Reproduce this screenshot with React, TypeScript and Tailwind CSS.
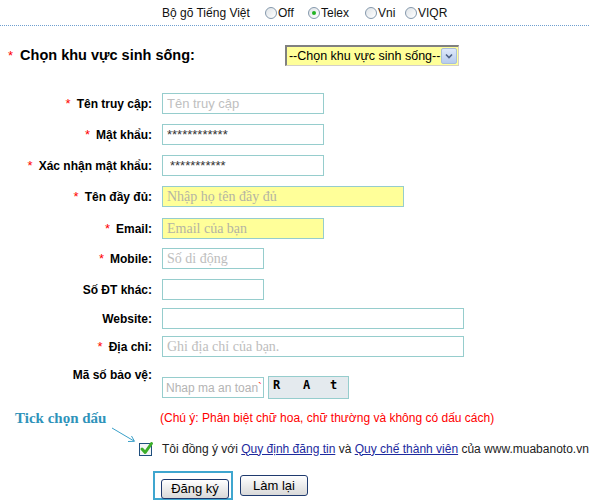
import React from 'react';

const sans = "font-['Liberation_Sans',Arial,sans-serif]";
const serif = "font-['Liberation_Serif','Times_New_Roman',serif]";

const Radio = ({ label, checked, className }: { label: string; checked?: boolean; className: string }) => (
  <span className={`flex items-center ${className}`}>
    <span className="w-[12px] h-[12px] rounded-full border border-[#8598ac] bg-linear-to-br from-[#dfe4e8] to-white flex items-center justify-center">
      {checked && <span className="w-[4px] h-[4px] rounded-full bg-[#22b322]" />}
    </span>
    <span className="ml-[1px]">{label}</span>
  </span>
);

interface RowProps {
  label: string;
  req?: boolean;
  className: string;
  children: React.ReactNode;
}

const Row = ({ label, req, className, children }: RowProps) => (
  <div className={`flex items-center ${className}`}>
    <div className="w-[152px] shrink-0 text-right text-[12px] font-bold text-black leading-[14px]">
      {req && <span className="text-[#ff0000] font-normal text-[13px] mr-[6px]">*</span>}
      {label}
    </div>
    <div className="ml-[10px] flex">{children}</div>
  </div>
);

// khung ô nhập, màu nền đặt riêng từng ô
const field = 'h-[21px] border border-[#96cdcd] px-[4px] outline-none';

export default function App() {
  return (
    <div className={`relative w-[589px] h-[500px] bg-white overflow-hidden text-black ${sans}`}>
      {/* bộ gõ */}
      <div className="h-[25px] flex items-center pl-[162px] text-[12px] text-[#111]">
        <span className="w-[103px]">Bộ gõ Tiếng Việt</span>
        <Radio label="Off" className="w-[43px]" />
        <Radio label="Telex" checked className="w-[57px]" />
        <Radio label="Vni" className="w-[40px]" />
        <Radio label="VIQR" className="w-[50px]" />
      </div>
      <div className="border-b border-dotted border-[#6f9fcf]" />

      {/* khu vực */}
      <div className="mt-[19px] h-[21px] flex items-center">
        <span className="ml-[8px] text-[13px] text-[#ff0000]">*</span>
        <span className="ml-[7px] text-[14.5px] font-bold">Chọn khu vực sinh sống:</span>
        <div className="ml-[90px] w-[174px] h-[21px] flex items-center bg-[#ffff99] border-t-2 border-l-2 border-r border-b border-t-[#808080] border-l-[#808080] border-r-[#d4d0c8] border-b-[#d4d0c8]">
          <span className="flex-1 pl-[2px] text-[12.5px] leading-[17px] whitespace-nowrap overflow-hidden">--Chọn khu vực sinh sống--</span>
          <span className="w-[16px] h-[16px] mr-[1px] rounded-[2px] border border-[#a9bedb] bg-linear-to-b from-[#dfe9fa] to-[#b6cbed] flex items-center justify-center">
            <svg width="8" height="6" viewBox="0 0 8 6">
              <path d="M1 1.5 L4 4.5 L7 1.5" fill="none" stroke="#4d6185" strokeWidth="1.6" />
            </svg>
          </span>
        </div>
      </div>

      {/* form */}
      <Row label="Tên truy cập:" req className="mt-[27px]">
        <input className={`${field} w-[162px] bg-white text-[13px] placeholder:text-[#c0c0c0]`} placeholder="Tên truy cập" readOnly />
      </Row>
      <Row label="Mật khẩu:" req className="mt-[10px]">
        <input className={`${field} w-[162px] bg-white text-[13px] text-[#333]`} value="************" readOnly />
      </Row>
      <Row label="Xác nhận mật khẩu:" req className="mt-[10px]">
        <input className={`${field} w-[162px] bg-white pl-[7px] text-[13px] text-[#333]`} value="***********" readOnly />
      </Row>
      <Row label="Tên đầy đủ:" req className="mt-[10px]">
        <input className={`${field} w-[242px] bg-[#ffff99] text-[14px] ${serif} placeholder:text-[#b4b4a4]`} placeholder="Nhập họ tên đầy đủ" readOnly />
      </Row>
      <Row label="Email:" req className="mt-[11px]">
        <input className={`${field} w-[162px] bg-[#ffff99] text-[14px] ${serif} placeholder:text-[#b4b4a4]`} placeholder="Email của bạn" readOnly />
      </Row>
      <Row label="Mobile:" req className="mt-[9px]">
        <input className={`${field} w-[102px] bg-white text-[14px] ${serif} placeholder:text-[#bdbdbd]`} placeholder="Số di động" readOnly />
      </Row>
      <Row label="Số ĐT khác:" className="mt-[10px]">
        <input className={`${field} w-[102px] bg-white`} readOnly />
      </Row>
      <Row label="Website:" className="mt-[8px]">
        <input className={`${field} w-[302px] bg-white`} readOnly />
      </Row>
      <Row label="Địa chỉ:" req className="mt-[7px]">
        <input className={`${field} w-[302px] bg-white text-[14px] ${serif} placeholder:text-[#bdbdbd]`} placeholder="Ghi địa chỉ của bạn." readOnly />
      </Row>

      {/* mã bảo vệ */}
      <div className="mt-[11px] flex items-start">
        <div className="w-[152px] shrink-0 text-right text-[12px] font-bold leading-[14px]">Mã số bảo vệ:</div>
        <div className="ml-[10px] pt-[8px] flex items-start">
          <div className="mt-[1px] w-[102px] h-[21px] border border-[#96cdcd] pl-[3px] flex items-center text-[12px] text-[#b4b4b4] whitespace-nowrap overflow-hidden">
            Nhap ma an toan<span className="text-[#ff3030]">`</span>
          </div>
          <div className="ml-[4px] w-[81px] h-[23px] border border-[#96cdcd] bg-[#e4eaee] flex items-start pt-[1px] pl-[4px] font-['DejaVu_Sans_Mono','Liberation_Mono',monospace] text-[12px] font-bold leading-[14px]">
            <span className="w-[30px]">R</span>
            <span className="w-[27px]">A</span>
            <span>t</span>
          </div>
        </div>
      </div>

      {/* ghi chú */}
      <div className="mt-[11px] flex items-center h-[16px]">
        <div className={`w-[152px] shrink-0 pl-[15px] text-[15px] font-bold text-[#2f93ba] whitespace-nowrap ${serif}`}>Tick chọn dấu</div>
        <div className="ml-[8px] text-[12px] text-[#ff0000] whitespace-nowrap">
          (Chú ý: Phân biệt chữ hoa, chữ thường và không có dấu cách)
        </div>
      </div>

      {/* đồng ý */}
      <div className="mt-[15px] flex items-center h-[15px]">
        <div className="w-[154px] shrink-0 flex justify-end">
          <svg width="16" height="16" viewBox="0 0 16 16">
            <rect x="1.5" y="2.5" width="12" height="12" fill="#f4f6f8" stroke="#1f4f7d" />
            <path d="M4 8 L7.2 11.5 L13.5 2.5" fill="none" stroke="#3cae2a" strokeWidth="3" strokeLinecap="round" strokeLinejoin="round" />
          </svg>
        </div>
        <div className="ml-[8px] text-[12px] text-[#222] whitespace-nowrap">
          Tôi đồng ý với <a className="text-[#1d2a9e] underline">Quy định đăng tin</a> và{' '}
          <a className="text-[#1d2a9e] underline">Quy chế thành viên</a> của www.muabanoto.vn
        </div>
      </div>

      {/* nút */}
      <div className="mt-[15px] flex items-start">
        <div className="ml-[153px] w-[80px] h-[29px] border-2 border-[#3fa6cf] pl-[6px] pt-[3px]">
          <button className="w-[68px] h-[20px] rounded-[3px] border border-[#1f3a6e] bg-linear-to-b from-white to-[#d9d9d9] text-[13px] leading-[18px] text-black">
            Đăng ký
          </button>
        </div>
        <button className="ml-[7px] mt-[4px] w-[68px] h-[21px] rounded-[3px] border border-[#1f3a6e] bg-linear-to-b from-white to-[#d9d9d9] text-[13px] leading-[18px] text-black">
          Làm lại
        </button>
      </div>

      {/* mũi tên chỉ */}
      <svg className="absolute left-[108px] top-[424px]" width="32" height="22" viewBox="0 0 32 22">
        <path d="M4 4 L26 17" stroke="#3aa0c9" strokeWidth="1" fill="none" />
        <path d="M20 17.5 L26.5 17.3 L23.5 12" stroke="#3aa0c9" strokeWidth="1" fill="none" />
      </svg>
    </div>
  );
}
